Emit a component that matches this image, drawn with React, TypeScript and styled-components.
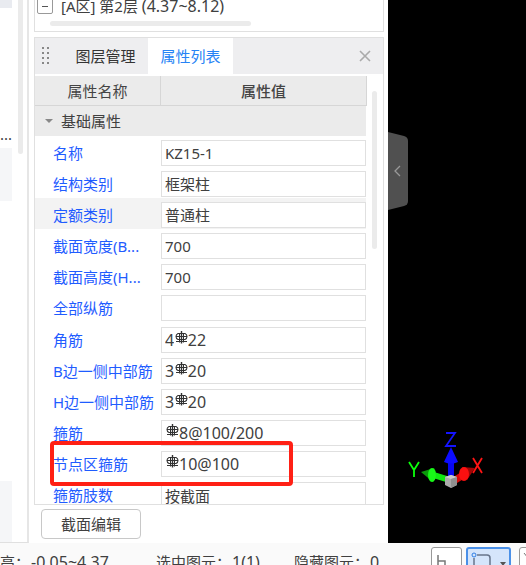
import React from "react";
import styled, { createGlobalStyle } from "styled-components";

const GlobalStyle = createGlobalStyle`
  * { box-sizing: border-box; }
  body { margin: 0; background: #fff; overflow: hidden; }
  body, button, input {
    font-family: "Noto Sans", "Noto Sans CJK SC", sans-serif;
    font-size: 15px;
    line-height: 20px;
    color: #404040;
  }
`;

const Page = styled.div`
  display: flex;
  flex-direction: column;
  height: 100vh;
`;
const Workspace = styled.main`
  flex: 1;
  min-height: 0;
  display: flex;
`;

const SidePane = styled.aside`
  width: 29px;
  display: flex;
  justify-content: space-between;
  border-right: 2px solid #e6e6e6;
  border-bottom: 1px solid #e0e0e0;
`;
const SideList = styled.div`
  width: 12px;
  display: flex;
  flex-direction: column;
`;
const SideCell = styled.div<{ $height: number; $tone?: string }>`
  height: ${(p) => p.$height}px;
  flex: none;
  background: ${(p) => p.$tone ?? "transparent"};
  display: flex;
  align-items: flex-end;
  justify-content: flex-end;
  white-space: nowrap;
`;
const SideScroll = styled.div`
  width: 5px;
  height: 154px;
  margin-right: 4px;
  border-radius: 0 0 3px 3px;
  background: #ebebeb;
`;

const Dock = styled.section`
  flex: 0 0 359px;
  display: flex;
  flex-direction: column;
  padding: 0 4px 0 5px;
`;
const TreePanel = styled.div`
  height: 32px;
  flex: none;
  border: 1px solid #e0e0e0;
  border-top: 0;
`;
const TreeRow = styled.div`
  height: 20px;
  display: flex;
  align-items: center;
  gap: 8px;
  padding-left: 2px;
  margin-top: -4px;
`;
const Expander = styled.button`
  width: 16px;
  height: 16px;
  padding: 0;
  display: grid;
  place-items: center;
  background: #fff;
  border: 1px solid #999;
  border-radius: 2px;
`;
const Figure = styled.span`
  font-size: 16px;
`;
const TreeScroll = styled.div`
  width: 201px;
  height: 5px;
  margin: 5px 0 0 15px;
  border-radius: 3px;
  background: #ebebeb;
`;

const PropertyPanel = styled.div`
  flex: 1;
  min-height: 0;
  margin-top: 5px;
  border: 1px solid #e0e0e0;
  overflow: hidden;
`;
const TabBar = styled.div`
  height: 36px;
  display: flex;
  align-items: stretch;
  background: #eeeef0;
`;
const Grip = styled.svg`
  width: 28px;
  height: 36px;
`;
const Tab = styled.button<{ $active?: boolean }>`
  width: 85px;
  padding: 0;
  border: 0;
  background: ${(p) => (p.$active ? "#fff" : "transparent")};
  color: ${(p) => (p.$active ? "#2683f5" : "#333")};
`;
const Close = styled.button`
  width: 36px;
  margin-left: auto;
  padding: 0;
  border: 0;
  background: none;
  display: grid;
  place-items: center;
`;
const PanelBody = styled.div`
  display: flex;
  margin-top: 2px;
`;
const Gutter = styled.div`
  width: 16px;
  display: flex;
  padding: 15px 0 0 5px;
`;
const Thumb = styled.div`
  width: 5px;
  height: 158px;
  border-radius: 3px;
  background: #ebebeb;
`;

const Table = styled.table`
  flex: 1;
  display: block;
`;
const Head = styled.thead`
  display: block;
`;
const Columns = styled.tr`
  display: grid;
  grid-template-columns: 126px 1fr;
`;
const HeadCell = styled.th<{ $strong?: boolean }>`
  height: 30px;
  padding: 5px 0 0;
  background: #ebebeb;
  border-right: 1px solid #d6d6d6;
  border-bottom: 1px solid #d6d6d6;
  color: #444;
  font-weight: ${(p) => (p.$strong ? 500 : 400)};
`;
const GroupRow = styled.tr`
  display: flex;
  height: 30px;
  background: #ebebeb;
  margin-right: 1px;
`;
const GroupCell = styled.th`
  display: flex;
  align-items: center;
  gap: 8px;
  padding: 0 0 0 10px;
  font-weight: 400;
`;
const Body = styled.tbody`
  display: grid;
  grid-template-rows: repeat(12, 1fr);
  height: 374px;
`;
const Row = styled.tr<{ $hover?: boolean }>`
  position: relative;
  display: grid;
  grid-template-columns: 126px 1fr;
  align-items: center;
  margin-right: 1px;
  background: ${(p) => (p.$hover ? "#f3f3f3" : "transparent")};
`;
const NameCell = styled.th`
  padding: 2px 0 0 18px;
  text-align: left;
  font-weight: 400;
  color: #1f5cff;
  white-space: nowrap;
`;
const ValueCell = styled.td`
  padding: 2px 0 0;
`;
const Field = styled.div`
  height: 26px;
  display: flex;
  align-items: center;
  padding-left: 3px;
  background: #fff;
  border: 1px solid #e0e0e0;
`;
const Input = styled.input<{ $count?: boolean; $spec?: boolean }>`
  min-width: 0;
  width: ${(p) => (p.$count ? "10px" : "100%")};
  height: 22px;
  padding: 0;
  border: 0;
  outline: 0;
  background: transparent;
  font-size: ${(p) => (p.$spec ? 16 : 15)}px;
`;
const Mark = styled.span`
  position: absolute;
  z-index: 1;
  top: -7px;
  left: 15px;
  width: 243px;
  height: 45px;
  border: 4px solid #ff2015;
  border-radius: 4px;
  pointer-events: none;
`;
const BarGlyph = styled.svg`
  flex: none;
  width: 14px;
  height: 14px;
  margin-bottom: 4px;
`;

const Actions = styled.div`
  flex: none;
  padding: 4px 7px;
`;
const EditButton = styled.button`
  width: 100px;
  height: 30px;
  padding: 0;
  background: #fff;
  border: 1px solid #c8c8c8;
  border-radius: 4px;
`;

const Viewport = styled.section`
  flex: 1;
  display: flex;
  flex-direction: column;
  justify-content: space-between;
  background: #000;
`;
const Collapse = styled.button`
  width: 21px;
  height: 78px;
  margin-top: 132px;
  padding: 0;
  border: 0;
  background: none;
  display: block;
`;
const Axes = styled.svg`
  width: 84px;
  height: 62px;
  margin: 0 0 53px 16px;
`;

const StatusBar = styled.footer`
  flex: 0 0 22px;
  overflow: hidden;
  background: #fafafa;
`;
const StatusRow = styled.div`
  display: flex;
  height: 38px;
  align-items: center;
  white-space: nowrap;
`;
const StatusText = styled.span<{ $width: number }>`
  display: flex;
  gap: 1px;
  flex: 0 0 ${(p) => p.$width}px;
`;
const Tools = styled.div`
  display: flex;
  gap: 4px;
`;
const Tool = styled.button<{ $width: number; $active?: boolean }>`
  flex: 0 0 ${(p) => p.$width}px;
  height: 30px;
  padding: 0;
  background: ${(p) => (p.$active ? "#d5e5fb" : "#fff")};
  border: ${(p) => (p.$active ? "2px solid #4a90e8" : "1px solid #999")};
  border-radius: 3px;
`;
const ToolGroup = styled(Tools)`
  margin-left: 4px;
`;

const RebarIcon = () => (
  <BarGlyph viewBox="0 0 14 14" fill="none" stroke="#333" aria-label="HRB400">
    <path d="M4 2.5h7q2 1 2 3t-2 3H4q-2-1-2-3t2-3z" strokeWidth="1.1" />
    <path d="M7.5 0v12.5" strokeWidth="1.4" />
    <path d="M5.5 2.5v9M9.5 2.5v9M2 5.5h11M2 10.5h11" />
  </BarGlyph>
);

type Property = { name: string; value: string; count?: string; rebar?: boolean; hover?: boolean; marked?: boolean };

const properties: Property[] = [
  { name: "名称", value: "KZ15-1" },
  { name: "结构类别", value: "框架柱" },
  { name: "定额类别", value: "普通柱", hover: true },
  { name: "截面宽度(B...", value: "700" },
  { name: "截面高度(H...", value: "700" },
  { name: "全部纵筋", value: "" },
  { name: "角筋", count: "4", rebar: true, value: "22" },
  { name: "B边一侧中部筋", count: "3", rebar: true, value: "20" },
  { name: "H边一侧中部筋", count: "3", rebar: true, value: "20" },
  { name: "箍筋", rebar: true, value: "8@100/200" },
  { name: "节点区箍筋", rebar: true, value: "10@100", marked: true },
  { name: "箍筋肢数", value: "按截面" },
];

const PropertyRow = ({ item }: { item: Property }) => (
  <Row $hover={item.hover}>
    <NameCell scope="row">{item.name}</NameCell>
    <ValueCell>
      <Field>
        {item.count && <Input $count $spec aria-label={item.name + "数量"} defaultValue={item.count} />}
        {item.rebar && <RebarIcon />}
        <Input $spec={item.rebar} aria-label={item.name} defaultValue={item.value} />
      </Field>
      {item.marked && <Mark />}
    </ValueCell>
  </Row>
);

export default function App() {
  return (
    <Page>
      <GlobalStyle />
      <Workspace>
        <SidePane>
          <SideList>
            <SideCell $height={8} $tone="#e9ebf0" />
            <SideCell $height={136}>...</SideCell>
            <SideCell $height={4} />
            <SideCell $height={53} $tone="#f5f6f8" />
            <SideCell $height={280} />
            <SideCell $height={61} $tone="#f5f6f8" />
          </SideList>
          <SideScroll />
        </SidePane>
        <Dock>
          <TreePanel>
            <TreeRow>
              <Expander aria-label="折叠">
                <svg width="8" height="8" stroke="#555"><path d="M1 4.5h6" /></svg>
              </Expander>
              <span>[A区] 第2层 <Figure>(4.37~8.12)</Figure></span>
            </TreeRow>
            <TreeScroll />
          </TreePanel>
          <PropertyPanel>
            <TabBar role="tablist">
              <Grip viewBox="0 0 28 36" fill="#888">
                {[9, 14, 19, 24].map((y) => (
                  <React.Fragment key={y}>
                    <rect x="7" y={y} width="2" height="2" />
                    <rect x="12" y={y} width="2" height="2" />
                  </React.Fragment>
                ))}
              </Grip>
              <Tab role="tab">图层管理</Tab>
              <Tab role="tab" $active aria-selected>属性列表</Tab>
              <Close aria-label="关闭">
                <svg width="12" height="12" fill="none" stroke="#aaa" strokeWidth="1.6">
                  <path d="M1 1l10 10M11 1L1 11" />
                </svg>
              </Close>
            </TabBar>
            <PanelBody>
              <Table cellSpacing={0}>
                <Head>
                  <Columns>
                    <HeadCell scope="col">属性名称</HeadCell>
                    <HeadCell scope="col" $strong>属性值</HeadCell>
                  </Columns>
                  <GroupRow>
                    <GroupCell scope="colgroup">
                      <svg width="8" height="5" fill="#888"><path d="M0 0h8L4 4z" /></svg>
                      基础属性
                    </GroupCell>
                  </GroupRow>
                </Head>
                <Body>
                  {properties.map((p) => <PropertyRow key={p.name} item={p} />)}
                </Body>
              </Table>
              <Gutter><Thumb /></Gutter>
            </PanelBody>
          </PropertyPanel>
          <Actions>
            <EditButton>截面编辑</EditButton>
          </Actions>
        </Dock>
        <Viewport>
          <Collapse aria-label="收起面板">
            <svg width="21" height="78" fill="none">
              <path d="M0 0l16 4q4 1 4 5v60q0 4-4 5L0 78z" fill="#505050" />
              <path d="M12 34l-5 5 5 5" stroke="#999" strokeWidth="1.3" />
            </svg>
          </Collapse>
          <Axes viewBox="0 0 84 62">
            <path d="M42 5h9l-9 13h10" fill="none" stroke="#1414ff" strokeWidth="1.8" />
            <path d="M5 34l5 8v7M15 34l-5 8" fill="none" stroke="#0bff0b" strokeWidth="1.8" />
            <path d="M69 30l9 15M78 30l-9 15" fill="none" stroke="#ff1414" strokeWidth="1.8" />
            <path d="M44 32h6v22h-6z" fill="#0808f0" />
            <path d="M40 34l7-15 7 15q-7 3-14 0z" fill="#0c0cff" />
            <path d="M30 44l13 4-1 6-13-4z" fill="#10e810" />
            <path d="M17 44l13-4q4 5-1 14z" fill="#0a9a0a" />
            <ellipse cx="28" cy="47" rx="4" ry="7" fill="#18f818" />
            <path d="M51 48l8-5 2 7-8 5z" fill="#d80808" />
            <path d="M58 39l13 1-8 12z" fill="#a00505" />
            <ellipse cx="60" cy="46" rx="5" ry="7" fill="#fa1010" />
            <path d="M41 49l6-2 6 2v8l-6 3-6-3z" fill="#aaa" />
            <path d="M41 49l6 2 6-2-6-2z" fill="#ccc" />
            <path d="M47 51l6-2v8l-6 3z" fill="#909090" />
          </Axes>
        </Viewport>
      </Workspace>
      <StatusBar>
        <StatusRow>
          <StatusText $width={156}>高：<Figure>-0.05~4.37</Figure></StatusText>
          <StatusText $width={138}>选中图元：<Figure>1(1)</Figure></StatusText>
          <StatusText $width={137}>隐藏图元：<Figure>0</Figure></StatusText>
          <Tools>
            <Tool $width={31} aria-label="正交">
              <svg width="29" height="28" fill="none" stroke="#777" strokeWidth="1.5"><path d="M6 7v14M6 13h7v8" /></svg>
            </Tool>
            <Tool $width={45} $active aria-label="捕捉">
              <svg width="41" height="26" fill="none">
                <path d="M9 6h10q3 0 3 3v14M6 9v14" stroke="#68758c" strokeWidth="1.5" />
                <circle cx="6" cy="6" r="2" stroke="#2f7fe6" />
                <path d="M32 13h6l-3 4z" fill="#555" />
              </svg>
            </Tool>
            <ToolGroup>
              <Tool $width={31} aria-label="过滤">
                <svg width="29" height="28" fill="none" stroke="#777"><path d="M4 5l4 5v8" /></svg>
              </Tool>
            </ToolGroup>
          </Tools>
        </StatusRow>
      </StatusBar>
    </Page>
  );
}
